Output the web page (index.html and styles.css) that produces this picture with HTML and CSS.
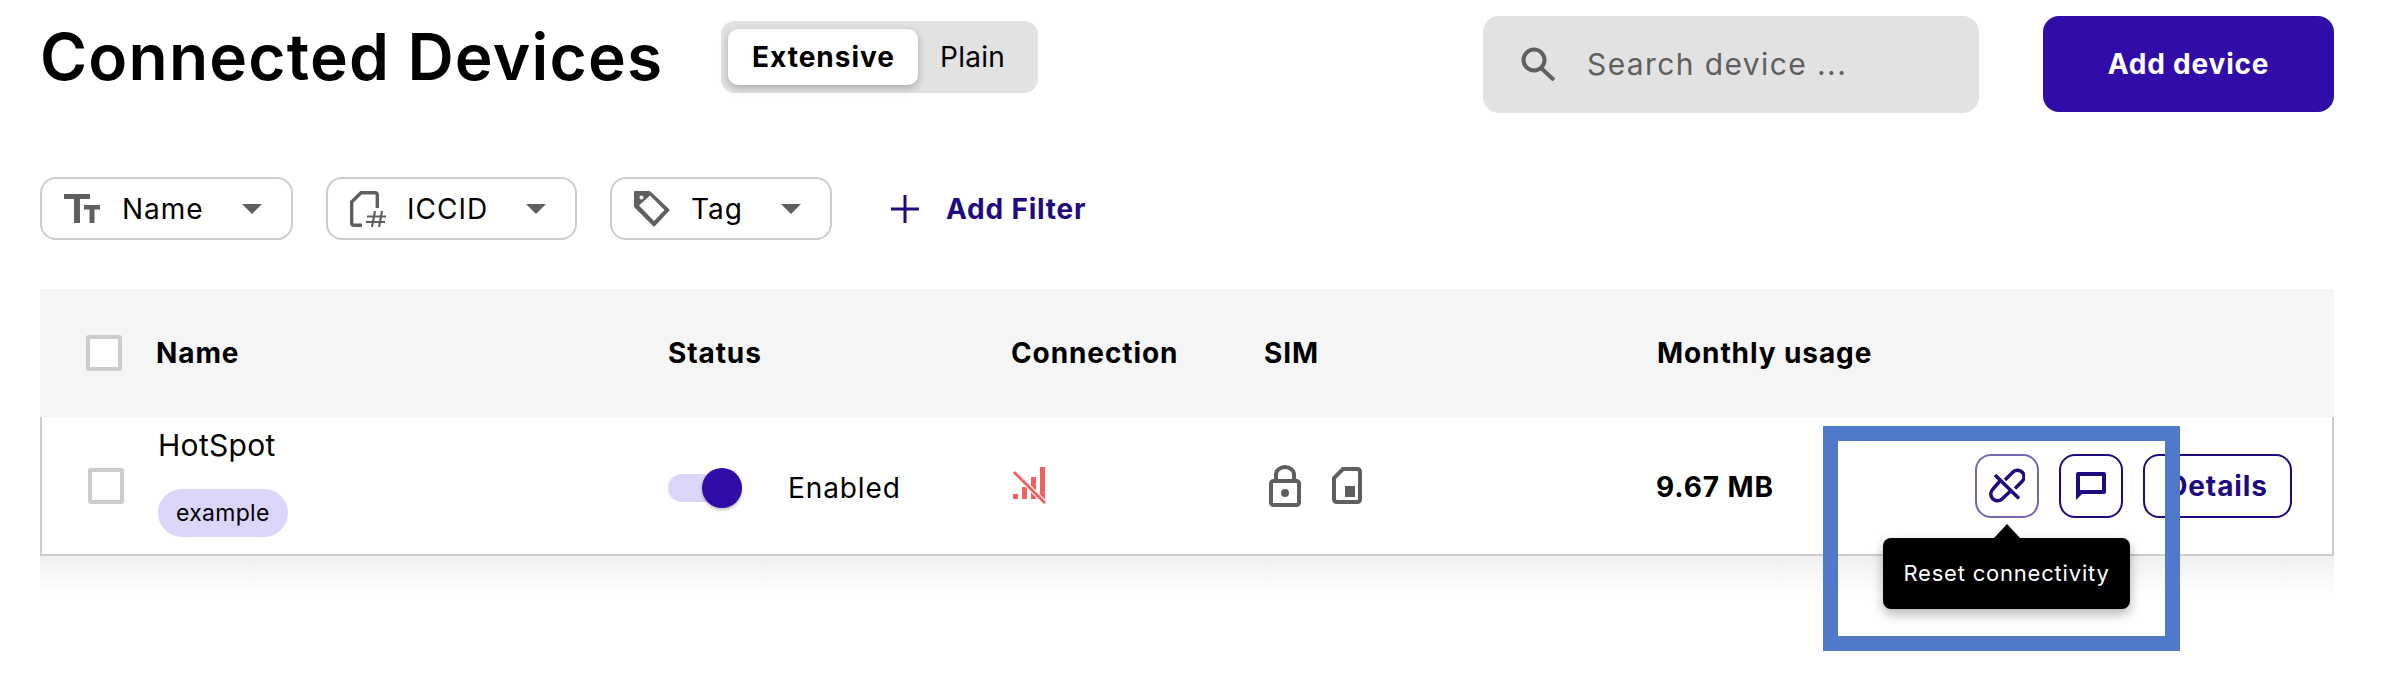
FILE: index.html
```html
<!DOCTYPE html>
<html lang="en">

<head>
	<meta charset="UTF-8">
	<title>Connected Devices</title>
	<link rel="stylesheet" href="styles.css">
</head>

<body>
	<div class="page">
		<div class="topbar">
			<h1>Connected Devices</h1>
			<div class="view-switch">
				<span class="view-option active">Extensive</span>
				<span class="view-option">Plain</span>
			</div>
			<div class="search">
				<svg class="search-icon" width="37" height="34" viewBox="0 0 37 34">
					<circle cx="14" cy="13" r="10.500" fill="none" stroke="#5f5f5f" stroke-width="4" />
					<path d="M21 21 L34 33" stroke="#5f5f5f" stroke-width="4" fill="none" />
				</svg>
				<span>Search device ...</span>
			</div>
			<button class="add-device">Add device</button>
		</div>

		<div class="filters">
			<div class="filter filter-name">
				<svg width="36" height="30" viewBox="0 0 36 30">
					<path d="M0 0 H26 V5 H16 V29 H10 V5 H0 Z M20 11 H36 V15.500 H30.500 V29 H25.500 V15.500 H20 Z" fill="#5f5f5f" />
				</svg>
				<span class="filter-label">Name</span>
				<i class="caret"></i>
			</div>
			<div class="filter filter-iccid">
				<svg width="37" height="36" viewBox="0 0 37 36">
					<path d="M12 34.300 H4 Q1.700 34.300 1.700 32 V11 L11 1.700 H25 Q27.300 1.700 27.300 4 V17" fill="none" stroke="#5f5f5f" stroke-width="3.400" />
					<path d="M25 20 L22 36 M32 20 L29 36 M17 25.500 H36 M16 31 H35" fill="none" stroke="#5f5f5f" stroke-width="2.200" />
				</svg>
				<span class="filter-label">ICCID</span>
				<i class="caret"></i>
			</div>
			<div class="filter filter-tag">
				<svg width="36" height="36" viewBox="0 0 36 36">
					<path fill-rule="evenodd" d="M1 0 H15 Q16 0 17 1 L35 18 Q36 19 35 20 L21 35 Q20 36 19 35 L1 17 Q0 16 0 15 V1 Q0 0 1 0 Z M5 14.500 L20 30 L30.500 19 L16 4.500 Z" fill="#5f5f5f" />
					<circle cx="7.500" cy="6.500" r="2" fill="#fff" />
				</svg>
				<span class="filter-label">Tag</span>
				<i class="caret"></i>
			</div>
			<div class="add-filter">
				<svg width="28" height="28" viewBox="0 0 28 28">
					<path d="M12.500 0 H15.500 V12.500 H28 V15.500 H15.500 V28 H12.500 V15.500 H0 V12.500 H12.500 Z" fill="#210a80" />
				</svg>
				<span>Add Filter</span>
			</div>
		</div>

		<div class="devices">
			<div class="devices-head">
				<div class="cell-check"><span class="checkbox"></span></div>
				<div>Name</div>
				<div>Status</div>
				<div>Connection</div>
				<div>SIM</div>
				<div>Monthly usage</div>
			</div>

			<div class="device-row">
				<div class="cell-check"><span class="checkbox"></span></div>
				<div class="device-name">
					<div class="device-title">HotSpot</div>
					<span class="tag">example</span>
				</div>
				<div class="device-status">
					<span class="switch"><span class="switch-thumb"></span></span>
					<span>Enabled</span>
				</div>
				<div class="device-connection">
					<svg width="36" height="38" viewBox="0 0 36 38">
						<path d="M1 27 H6 V32 H1 Z M10 20 H15 V32 H10 Z M19 10 H24 V32 H19 Z M28 0 H33 V32 H28 Z" fill="#f0605f" />
						<path d="M2 5 L33 36" stroke="#fff" stroke-width="5" />
						<path d="M2 5 L33 36" stroke="#f0605f" stroke-width="3" />
					</svg>
				</div>
				<div class="device-sim">
					<svg width="32" height="42" viewBox="0 0 32 42">
						<rect x="2" y="16" width="28" height="24" rx="2.500" fill="none" stroke="#5f5f5f" stroke-width="4" />
						<path d="M7 15 V9.500 A9 7.500 0 0 1 25 9.500 V15" fill="none" stroke="#5f5f5f" stroke-width="4" />
						<circle cx="16" cy="28" r="4" fill="#5f5f5f" />
					</svg>
					<svg width="30" height="37" viewBox="0 0 30 37">
						<path d="M11 2 H25 Q28 2 28 5 V32 Q28 35 25 35 H5 Q2 35 2 32 V11 Z" fill="none" stroke="#5f5f5f" stroke-width="4" />
						<rect x="13" y="19" width="10" height="11" fill="#5f5f5f" />
					</svg>
				</div>
				<div class="device-usage">9.67 MB</div>
				<div class="device-actions">
					<div class="tooltip-anchor">
						<button class="icon-button faded">
							<svg width="36" height="36" viewBox="0 0 36 36">
								<path d="M6 7 L30 30.500" fill="none" stroke="#210a80" stroke-width="3.500" />
								<path d="M16 12 L24 4 A6.500 6.500 0 0 1 33 13.500 L26 20.500" fill="none" stroke="#210a80" stroke-width="3.500" />
								<path d="M11 13 L4 21 A6.500 6.500 0 0 0 13 31 L21 23.500" fill="none" stroke="#210a80" stroke-width="3.500" />
							</svg>
						</button>
						<div class="tooltip">Reset connectivity</div>
					</div>
					<button class="icon-button">
						<svg width="30" height="28" viewBox="0 0 30 28">
							<path fill-rule="evenodd" d="M2 0 H28 Q30 0 30 2 V20 Q30 22 28 22 H6 L0 28 V2 Q0 0 2 0 Z M4 4 V18 H26 V4 Z" fill="#210a80" />
						</svg>
					</button>
					<button class="details">Details</button>
				</div>
			</div>
			<div class="row-shadow"></div>
		</div>

		<div class="highlight"></div>
	</div>
</body>

</html>
```

FILE: styles.css
```css
*,
*:before,
*:after {
	box-sizing: border-box;
}

html {
	font-family: Inter, "Liberation Sans", sans-serif;
}

body {
	margin: 0;
	background-color: #fff;
	color: #000;
}

button {
	font-family: inherit;
	background: none;
	cursor: pointer;
}

.page {
	position: relative;
	width: 2384px;
	height: 690px;
	overflow: hidden;
	padding: 16px 50px 0 40px;
}

.topbar {
	display: flex;
	align-items: flex-start;
}

h1 {
	width: 681px;
	margin: 0;
	font-size: 64px;
	font-weight: 600;
	line-height: 82px;
	letter-spacing: 1.2px;
}

.view-switch {
	display: flex;
	width: 317px;
	height: 72px;
	margin-top: 5px;
	padding: 8px 7px;
	border-radius: 14px;
	background-color: #e2e2e2;
	align-items: center;
	font-size: 28px;
	letter-spacing: .3px;
}

.view-option {
	padding: 0 21px 0 22px;
}

.view-option.active {
	display: flex;
	align-items: center;
	width: 190px;
	height: 56px;
	padding: 0 0 0 24px;
	border-radius: 10px;
	background-color: #fff;
	box-shadow: 0 3px 8px rgba(0, 0, 0, .25);
	font-weight: 700;
	letter-spacing: 1px;
}

.search {
	display: flex;
	align-items: center;
	width: 496px;
	height: 97px;
	margin-left: 445px;
	padding: 0 0 2px 37px;
	border-radius: 16px;
	background-color: #e2e2e2;
	color: #5f5f5f;
	font-size: 30px;
	letter-spacing: 1.4px;
}

.search-icon {
	margin-right: 30px;
}

.add-device {
	width: 291px;
	height: 96px;
	margin-left: 64px;
	border: 0;
	border-radius: 16px;
	background-color: #310ca8;
	color: #fff;
	font-size: 28px;
	font-weight: 700;
	letter-spacing: .8px;
}

.filters {
	display: flex;
	align-items: center;
	height: 63px;
	margin-top: 64px;
}

.filter {
	display: flex;
	align-items: center;
	height: 63px;
	margin-right: 33px;
	padding-left: 22px;
	border: 2px solid #ccc;
	border-radius: 16px;
	font-size: 28px;
}

.filter-name {
	width: 253px;
}

.filter-iccid {
	width: 251px;
}

.filter-tag {
	width: 222px;
}

.filter-label {
	margin-left: 22px;
	letter-spacing: 1px;
}

.filter-iccid .filter-label {
	margin-left: 20px;
}

.filter-tag .filter-label {
	margin-left: 21px;
}

.caret {
	width: 0;
	height: 0;
	margin-left: auto;
	margin-right: 29px;
	border-left: 10px solid transparent;
	border-right: 10px solid transparent;
	border-top: 10px solid #5f5f5f;
}

.add-filter {
	display: flex;
	align-items: center;
	margin-left: 26px;
	color: #210a80;
	font-size: 28px;
	font-weight: 700;
	letter-spacing: .8px;
}

.add-filter span {
	margin-left: 27px;
}

.devices {
	margin-top: 49px;
	width: 2294px;
}

.devices-head {
	display: grid;
	grid-template-columns: 116px 512px 343px 253px 393px 1fr;
	align-items: center;
	height: 128px;
	background-color: #f5f5f5;
	font-size: 28px;
	font-weight: 700;
	letter-spacing: .9px;
}

.cell-check {
	padding-left: 46px;
}

.checkbox {
	display: block;
	width: 36px;
	height: 36px;
	border: 4px solid #ccc;
	border-radius: 3px;
	background-color: #fff;
}

.device-row {
	display: grid;
	grid-template-columns: 116px 510px 344px 257px 388px 1fr;
	align-items: center;
	height: 139px;
	border: 2px solid #ccc;
	border-top: 0;
	font-size: 28px;
	letter-spacing: .9px;
}

.device-name {
	padding-bottom: 7px;
	letter-spacing: 0;
}

.device-title {
	font-size: 30px;
	line-height: 36px;
	letter-spacing: .3px;
}

.tag {
	display: inline-block;
	margin-top: 26px;
	padding: 0 18px;
	height: 48px;
	border-radius: 24px;
	background-color: #dcd5fa;
	font-size: 23px;
	line-height: 48px;
	letter-spacing: .3px;
}

.device-status {
	display: flex;
	align-items: center;
	gap: 46px;
	padding-top: 5px;
}

.switch {
	position: relative;
	display: block;
	width: 74px;
	height: 28px;
	border-radius: 14px;
	background-color: #dcd5fa;
}

.switch-thumb {
	position: absolute;
	top: -6px;
	right: 0;
	width: 40px;
	height: 40px;
	border-radius: 50%;
	background-color: #310ca8;
	box-shadow: 0 2px 3px rgba(0, 0, 0, .25);
}

.device-connection svg {
	display: block;
}

.device-sim {
	display: flex;
	align-items: center;
	gap: 31px;
}

.device-usage {
	font-weight: 700;
	padding-top: 2px;
	margin-left: -1px;
}

.device-actions {
	position: absolute;
	display: flex;
	gap: 20px;
	right: 92px;
}

.tooltip-anchor {
	position: relative;
}

.icon-button {
	display: flex;
	align-items: center;
	justify-content: center;
	width: 64px;
	height: 64px;
	padding: 0;
	border: 2px solid #210a80;
	border-radius: 16px;
}

.icon-button.faded {
	border-color: #7566b0;
}

.details {
	width: 149px;
	height: 64px;
	padding: 0;
	border: 2px solid #210a80;
	border-radius: 16px;
	color: #210a80;
	font-size: 28px;
	font-weight: 700;
	letter-spacing: .9px;
}

.tooltip {
	position: absolute;
	top: 84px;
	left: -92px;
	display: flex;
	align-items: center;
	justify-content: center;
	width: 247px;
	height: 71px;
	border-radius: 8px;
	background-color: #000;
	box-shadow: 0 5px 12px rgba(0, 0, 0, .3);
	color: #fff;
	font-size: 22px;
	letter-spacing: .8px;
	white-space: nowrap;
}

.tooltip:before {
	content: "";
	position: absolute;
	top: -14px;
	left: 111px;
	border-left: 13px solid transparent;
	border-right: 13px solid transparent;
	border-bottom: 14px solid #000;
}

.row-shadow {
	height: 40px;
	background: linear-gradient(#f0f0f0, #fff);
}

.highlight {
	position: absolute;
	top: 426px;
	left: 1823px;
	width: 357px;
	height: 225px;
	border: 15px solid #5079c9;
	pointer-events: none;
}
```
